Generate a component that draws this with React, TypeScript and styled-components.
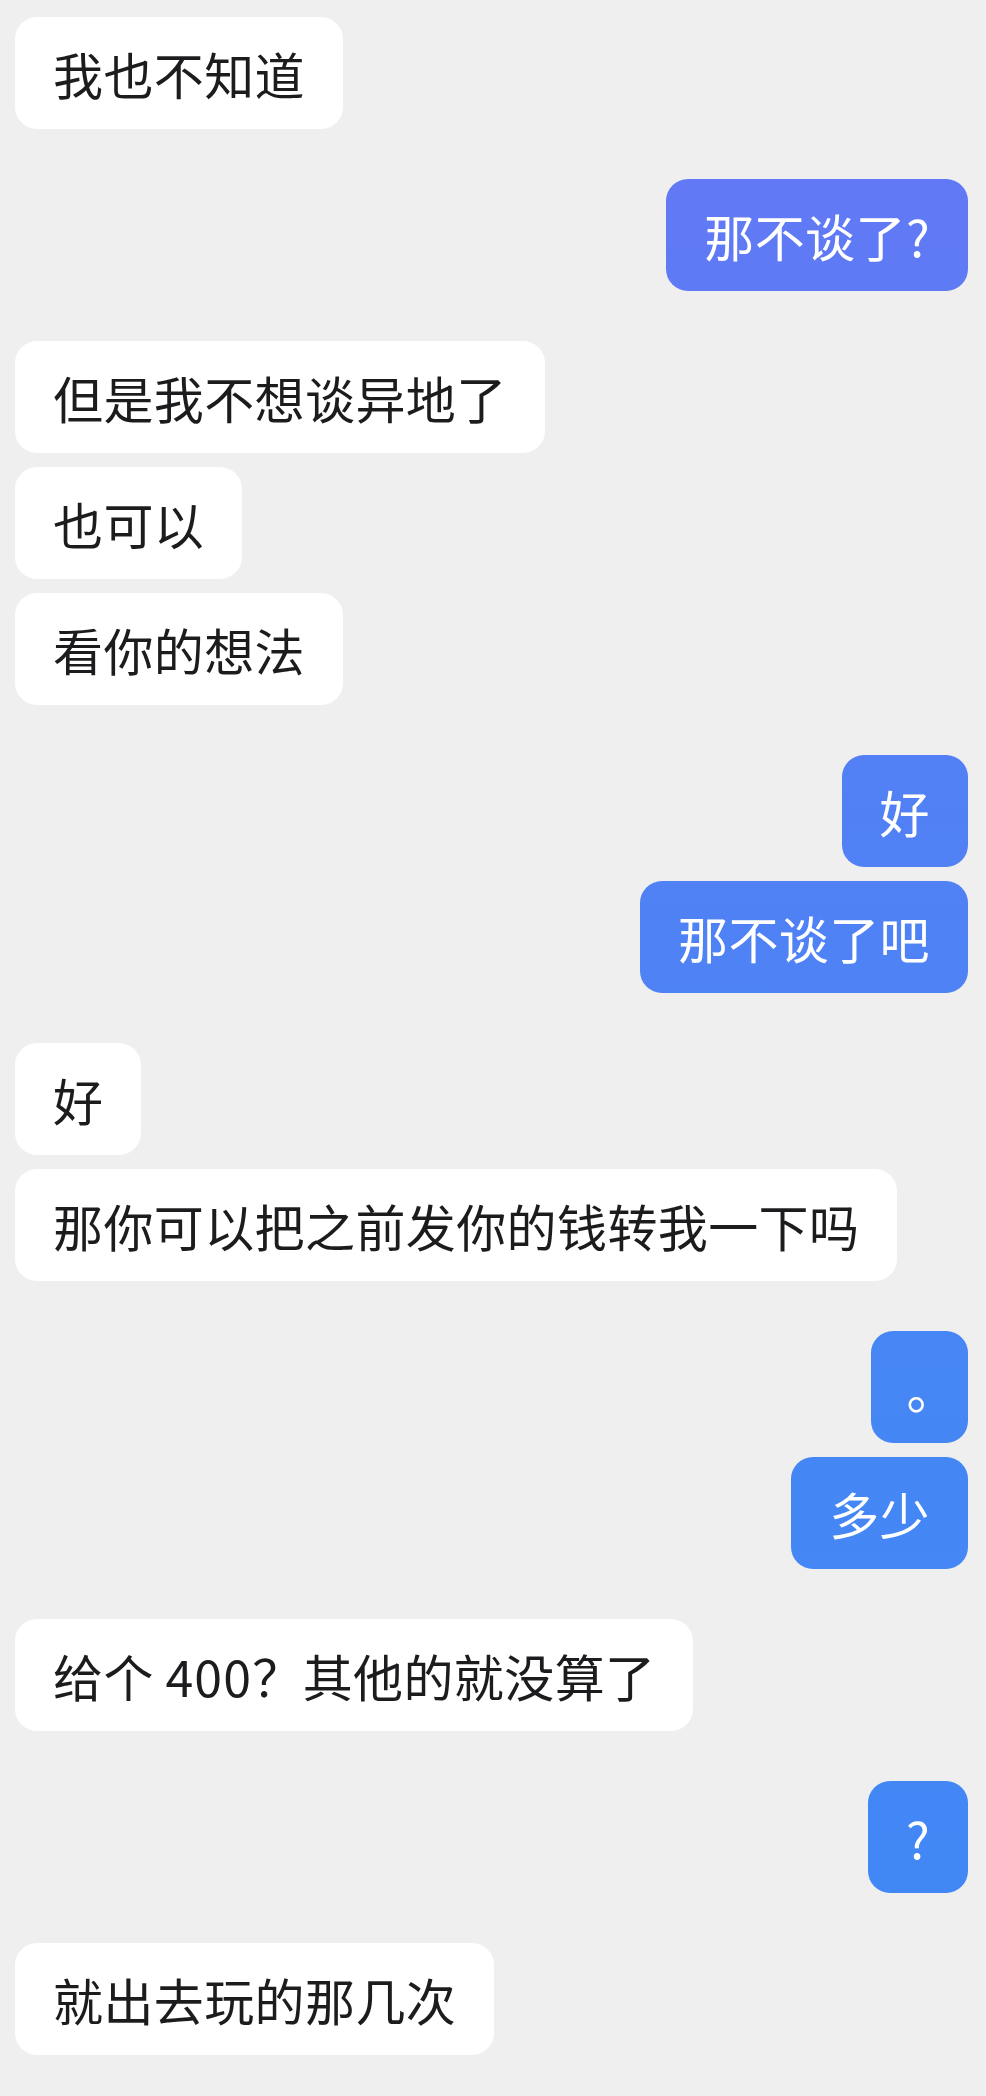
import React from "react";
import styled, { createGlobalStyle, css } from "styled-components";

type TSide = {
    $mine?: boolean
}

type TBubble = {
    $mine?: boolean
    $half?: boolean
}

const GlobalStyle = createGlobalStyle`
* {
    box-sizing: border-box;
    margin: 0;
    padding: 0;
}
body {
    background-color: #efeff0;
    font-family: "Noto Sans CJK SC", "Noto Sans", sans-serif;
}
`

const Thread = styled.div`
    display: flex;
    flex-direction: column;
    gap: 50px;
    padding: 17px 18px 40px 15px;
    min-height: 2096px;
`

const Group = styled.div<TSide>`
    display: flex;
    flex-direction: column;
    gap: 14px;
    align-items: ${props => props.$mine ? "flex-end" : "flex-start"};
`

const Bubble = styled.div<TBubble>`
    display: flex;
    align-items: center;
    height: 112px;
    padding: 0 38px;
    border-radius: 22px;
    font-size: 50px;
    line-height: 1;
    letter-spacing: 0.4px;
    white-space: pre;
    color: #1c1c1e;
    background-color: #ffffff;
    ${props => props.$mine && css`
        color: #ffffff;
        background-image: linear-gradient(
            180deg,
            #6677f5 0%,
            #6179f5 9.5%,
            #5280f5 37.2%,
            #4686f5 64.6%,
            #4287f5 86.1%,
            #4088f5 100%
        );
        background-attachment: fixed;
    `}
    ${props => props.$half && css`
        font-feature-settings: "halt";
        padding: 0 36px;
    `}
`

// digits sit a bit wider than the CJK font gives them
const Num = styled.span`
    letter-spacing: 1.2px;
`

type TMsg = { text: React.ReactNode, half?: boolean }

const thread: { mine: boolean, msgs: TMsg[] }[] = [
    { mine: false, msgs: [{ text: "我也不知道" }] },
    { mine: true, msgs: [{ text: "那不谈了?" }] },
    { mine: false, msgs: [{ text: "但是我不想谈异地了" }, { text: "也可以" }, { text: "看你的想法" }] },
    { mine: true, msgs: [{ text: "好" }, { text: "那不谈了吧" }] },
    { mine: false, msgs: [{ text: "好" }, { text: "那你可以把之前发你的钱转我一下吗" }] },
    { mine: true, msgs: [{ text: "。", half: true }, { text: "多少" }] },
    { mine: false, msgs: [{ text: <>给个 <Num>400</Num>？其他的就没算了</> }] },
    { mine: true, msgs: [{ text: "?" }] },
    { mine: false, msgs: [{ text: "就出去玩的那几次" }] },
]

export default function App() {
    return (
        <>
            <GlobalStyle />
            <Thread>
                {thread.map((g, i) => (
                    <Group key={i} $mine={g.mine}>
                        {g.msgs.map((m, j) => (
                            <Bubble key={j} $mine={g.mine} $half={m.half}>{m.text}</Bubble>
                        ))}
                    </Group>
                ))}
            </Thread>
        </>
    )
}
